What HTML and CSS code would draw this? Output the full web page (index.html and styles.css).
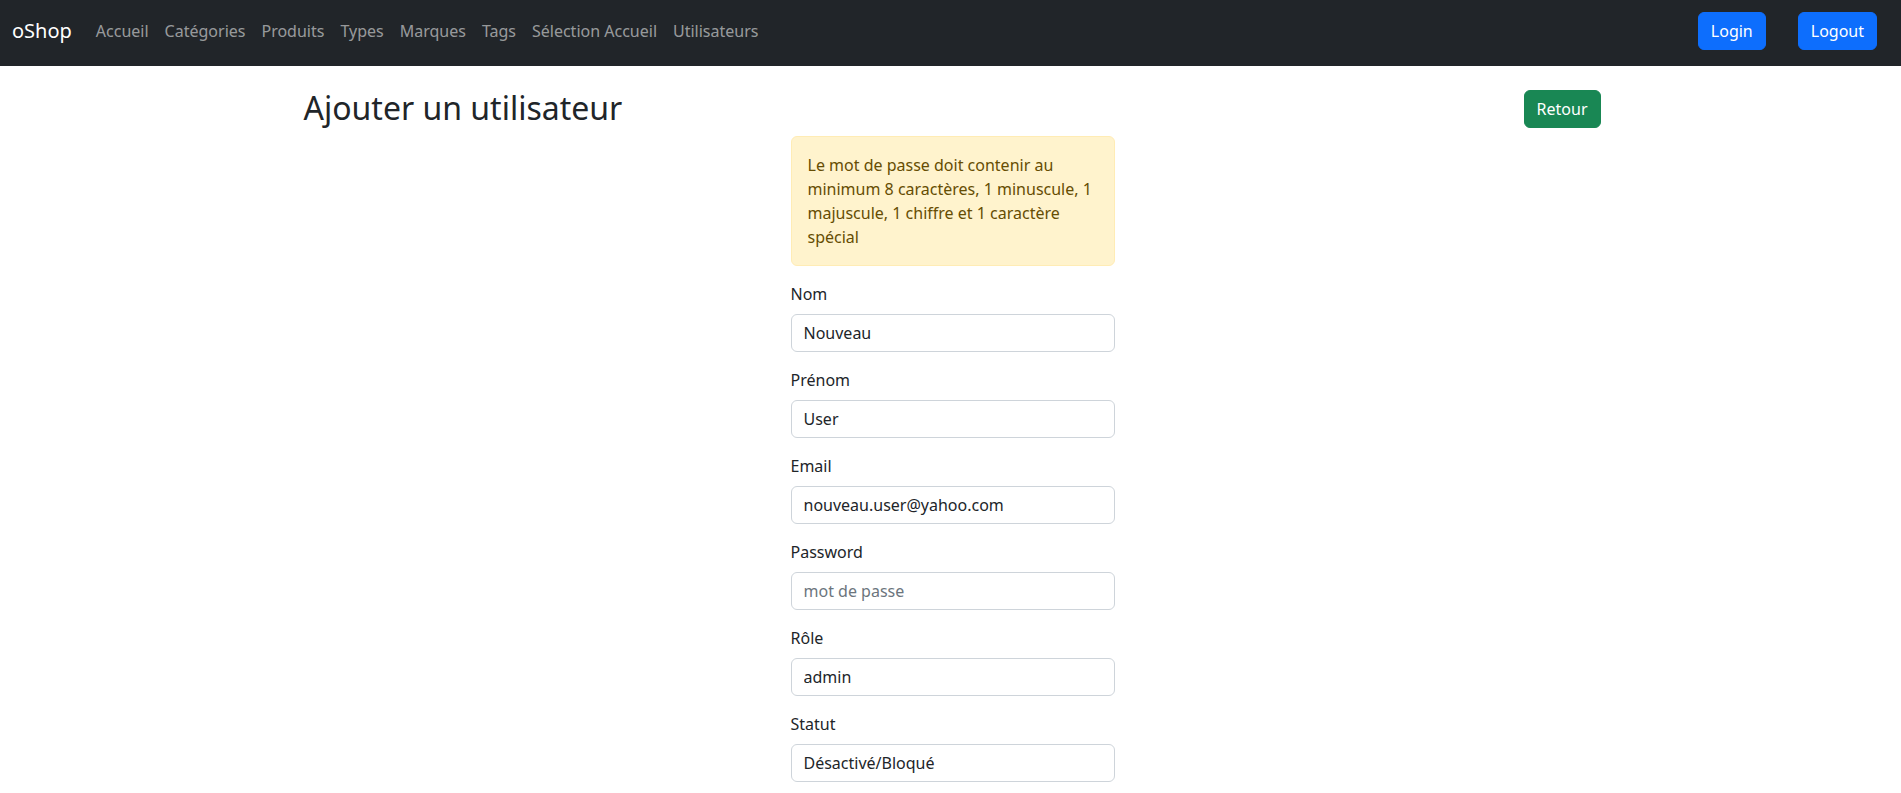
FILE: index.html
```html
<!DOCTYPE html>
<html lang="fr">
<head>
<meta charset="utf-8">
<title>oShop - Ajouter un utilisateur</title>
<link rel="stylesheet" href="styles.css">
</head>
<body>
<nav class="navbar">
  <a class="brand" href="#">oShop</a>
  <ul class="nav-links">
    <li><a href="#">Accueil</a></li>
    <li><a href="#">Catégories</a></li>
    <li><a href="#">Produits</a></li>
    <li><a href="#">Types</a></li>
    <li><a href="#">Marques</a></li>
    <li><a href="#">Tags</a></li>
    <li><a href="#">Sélection Accueil</a></li>
    <li><a href="#">Utilisateurs</a></li>
  </ul>
  <div class="nav-actions">
    <a class="btn btn-primary btn-login" href="#">Login</a>
    <a class="btn btn-primary btn-logout" href="#">Logout</a>
  </div>
</nav>
<main class="container">
  <div class="page-header">
    <h1>Ajouter un utilisateur</h1>
    <a class="btn btn-success" href="#">Retour</a>
  </div>
  <form class="user-form">
    <div class="alert">Le mot de passe doit contenir au minimum 8 caractères, 1 minuscule, 1 majuscule, 1 chiffre et 1 caractère spécial</div>
    <div class="field">
      <label for="lastname">Nom</label>
      <input id="lastname" type="text" value="Nouveau">
    </div>
    <div class="field">
      <label for="firstname">Prénom</label>
      <input id="firstname" type="text" value="User">
    </div>
    <div class="field">
      <label for="email">Email</label>
      <input id="email" type="email" value="nouveau.user@yahoo.com">
    </div>
    <div class="field">
      <label for="password">Password</label>
      <input id="password" type="password" placeholder="mot de passe">
    </div>
    <div class="field">
      <label for="role">Rôle</label>
      <input id="role" type="text" value="admin">
    </div>
    <div class="field last">
      <label for="status">Statut</label>
      <input id="status" type="text" value="Désactivé/Bloqué">
    </div>
  </form>
</main>
</body>
</html>
```
FILE: styles.css
```css
* { box-sizing: border-box; }
html, body { margin: 0; padding: 0; }
body {
  font-family: "Noto Sans", "Open Sans", "Liberation Sans", sans-serif;
  font-size: 16px;
  line-height: 1.5;
  color: #212529;
  background: #fff;
  overflow: hidden;
}
a { text-decoration: none; }

.navbar {
  background: #212529;
  height: 66px;
  display: flex;
  align-items: center;
  padding: 11px 12px 15px;
}
.brand {
  color: #fff;
  font-size: 20px;
  line-height: 30px;
  margin-right: 16px;
}
.nav-links {
  list-style: none;
  margin: 0;
  padding: 0;
  display: flex;
  flex: 1;
}
.nav-links a {
  display: block;
  padding: 8px 8px;
  color: rgba(255, 255, 255, 0.55);
}
.nav-actions {
  display: flex;
  align-items: center;
}
.btn {
  display: inline-block;
  padding: 6px 12px;
  border: 1px solid transparent;
  border-radius: 6px;
  font-size: 16px;
  line-height: 24px;
  color: #fff;
}
.btn-primary { background: #0d6efd; border-color: #0d6efd; }
.btn-success { background: #198754; border-color: #198754; }
.btn-login { margin-right: 32px; }
.btn-logout { margin-right: 12px; }

.container {
  width: 1320px;
  margin: 0 auto;
  padding: 0 12px;
}
.page-header {
  display: flex;
  justify-content: space-between;
  align-items: center;
  height: 48px;
  margin-top: 18px;
}
.page-header h1 {
  margin: 0;
  font-size: 32px;
  font-weight: 400;
  line-height: 38px;
  padding-left: 1px;
}
.page-header .btn { margin-right: -2px; margin-top: 1px; }
.user-form {
  width: 324px;
  margin: 4px auto 0;
  position: relative;
  left: 2px;
}
.alert {
  background: #fff3cd;
  border: 1px solid #ffecb5;
  color: #664d03;
  border-radius: 6px;
  padding: 16px;
  margin-bottom: 16px;
}
.field { margin-bottom: 16px; }
.field.last { margin-bottom: 0; }
.field label {
  display: inline-block;
  margin-bottom: 8px;
}
.field input {
  display: block;
  width: 100%;
  padding: 6px 12px;
  font-family: inherit;
  font-size: 16px;
  line-height: 24px;
  color: #212529;
  background: #fff;
  border: 1px solid #ced4da;
  border-radius: 6px;
  outline: none;
}
.field input::placeholder { color: #6c757d; opacity: 1; }
```
